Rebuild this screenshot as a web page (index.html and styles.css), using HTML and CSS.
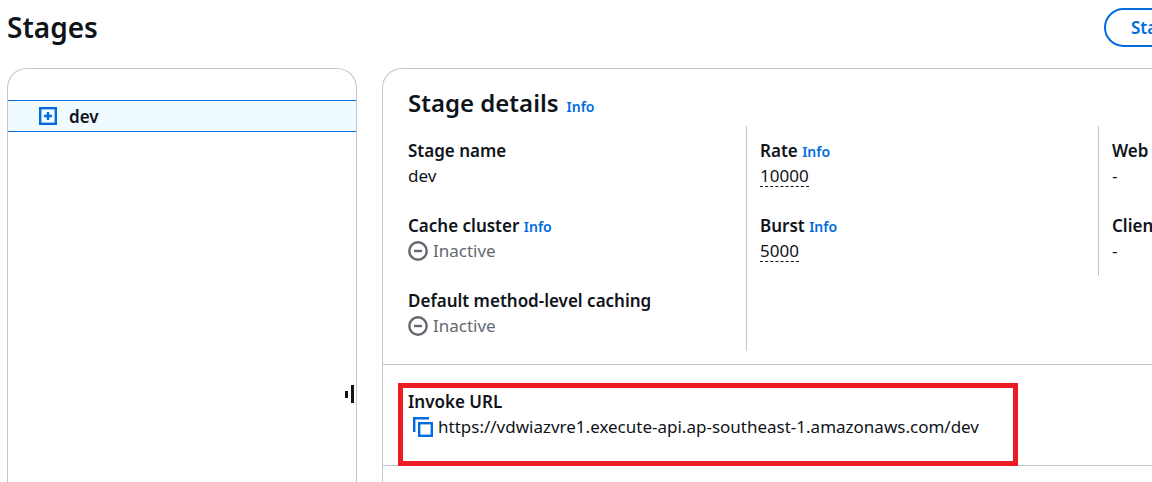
FILE: index.html
```html
<!DOCTYPE html>
<html lang="en">
<head>
<meta charset="utf-8">
<title>Stages</title>
<link rel="stylesheet" href="styles.css">
</head>
<body>
<div class="page">
  <header class="page-header">
    <h1 class="page-title">Stages</h1>
    <div class="page-actions"><button class="button" type="button">Stage actions</button></div>
  </header>
  <div class="layout">
    <nav class="tree" aria-label="Stages">
      <div class="tree-row">
        <button class="icon-button" type="button" aria-label="Expand dev">
          <svg width="18" height="18" viewBox="0 0 18 18" fill="none" stroke="#006ce0" stroke-width="2.4"><rect x="1.2" y="1.2" width="15.6" height="15.6"/><path d="M9 5v8M5 9h8"/></svg>
        </button>
        <span class="tree-label">dev</span>
      </div>
      <button class="resize-handle" type="button" aria-label="Resize panel">
        <svg width="9" height="18" viewBox="0 0 9 18" fill="#0f141a"><path d="M0 6h3v7H0zM6 0h3v18H6z"/></svg>
      </button>
    </nav>
    <main class="details">
      <div class="details-header">
        <h2 class="details-title">Stage details</h2>
        <a class="info" href="#">Info</a>
      </div>
      <div class="columns">
        <dl class="column">
          <div class="item"><dt class="label">Stage name</dt><dd class="value">dev</dd></div>
          <div class="item"><dt class="label">Cache cluster <a class="info" href="#">Info</a></dt>
            <dd class="value value-inactive"><svg width="20" height="20" viewBox="0 0 20 20" fill="none" stroke="#656871" stroke-width="2.4"><circle cx="10" cy="10" r="8.7"/><path d="M6 10h8"/></svg>Inactive</dd></div>
          <div class="item"><dt class="label">Default method-level caching</dt>
            <dd class="value value-inactive"><svg width="20" height="20" viewBox="0 0 20 20" fill="none" stroke="#656871" stroke-width="2.4"><circle cx="10" cy="10" r="8.7"/><path d="M6 10h8"/></svg>Inactive</dd></div>
        </dl>
        <dl class="column column-divided">
          <div class="item"><dt class="label">Rate <a class="info" href="#">Info</a></dt><dd class="value"><span class="hint">10000</span></dd></div>
          <div class="item"><dt class="label">Burst <a class="info" href="#">Info</a></dt><dd class="value"><span class="hint">5000</span></dd></div>
        </dl>
        <dl class="column column-divided column-short">
          <div class="item"><dt class="label">Web</dt><dd class="value">-</dd></div>
          <div class="item"><dt class="label">Client</dt><dd class="value">-</dd></div>
        </dl>
      </div>
      <section class="invoke">
        <h3 class="label">Invoke URL</h3>
        <div class="url-row">
          <button class="icon-button" type="button" aria-label="Copy invoke URL">
            <svg width="20" height="20" viewBox="0 0 20 20" fill="none" stroke="#006ce0" stroke-width="2.4"><path d="M16 1.2H1.2V15"/><rect x="6.2" y="6.2" width="12.6" height="12.6"/></svg>
          </button>
          <span class="url">https://vdwiazvre1.execute-api.ap-southeast-1.amazonaws.com/dev</span>
        </div>
        <div class="highlight"></div>
      </section>
    </main>
  </div>
</div>
</body>
</html>
```
FILE: styles.css
```css
* { box-sizing: border-box; }

body {
  margin: 0;
  overflow: hidden;
  background: #fff;
  color: #0f141a;
  font: 400 17px/25px "Noto Sans", "Open Sans", sans-serif;
}

h1, h2, h3, dl, dd { margin: 0; }

.page {
  display: flex;
  flex-direction: column;
  min-height: 100vh;
  padding: 8px 0 0 7px;
}

.page-header {
  display: flex;
  height: 60px;
}

.page-title {
  flex: 1;
  font-size: 28px;
  line-height: 38px;
  font-weight: 600;
}

.page-actions {
  flex: 0 0 48px;
  min-width: 0;
}

.button {
  height: 39px;
  padding: 0 25px;
  border: 2px solid #006ce0;
  border-radius: 20px;
  background: #fff;
  color: #006ce0;
  font: 600 17px/25px "Noto Sans", "Open Sans", sans-serif;
  white-space: nowrap;
}

.layout {
  display: flex;
  flex: 1;
  gap: 25px;
}

.tree {
  position: relative;
  flex: 0 0 350px;
  padding-top: 31px;
  border: 1px solid #c6c6cd;
  border-bottom: 0;
  border-radius: 20px 20px 0 0;
}

.tree-row {
  display: flex;
  align-items: center;
  gap: 12px;
  height: 32px;
  padding-left: 31px;
  border: solid #006ce0;
  border-width: 1px 0;
  background: #f0fbff;
}

.tree-label { font-weight: 600; }

.icon-button {
  display: flex;
  padding: 0;
  border: 0;
  background: none;
}

.resize-handle {
  position: absolute;
  top: 316px;
  right: 2px;
  display: flex;
  padding: 0;
  border: 0;
  background: none;
}

.details {
  flex: 1;
  min-width: 0;
  border: 1px solid #c6c6cd;
  border-width: 1px 0 0 1px;
  border-radius: 20px 0 0 0;
}

.details-header {
  display: flex;
  align-items: baseline;
  gap: 8px;
  padding: 19px 25px 8px;
}

.details-title {
  font-size: 24px;
  line-height: 30px;
  font-weight: 600;
}

.info {
  color: #006ce0;
  font-size: 14px;
  font-weight: 600;
  line-height: 20px;
  text-decoration: none;
}

.columns {
  display: grid;
  grid-template-columns: 351fr 352fr 54px;
  padding: 0 0 13px 12px;
  border-bottom: 1px solid #c6c6cd;
}

.column {
  min-width: 0;
  padding-left: 13px;
  white-space: nowrap;
}

.column-divided { border-left: 1px solid #c6c6cd; }

.column-short { align-self: start; }

.item { padding: 12px 0 13px; }

.label {
  font-size: 17px;
  line-height: 25px;
  font-weight: 600;
}

.value { height: 25px; }

.value-inactive {
  display: flex;
  align-items: center;
  gap: 5px;
  color: #656871;
}

.hint {
  display: inline-block;
  line-height: 21px;
  border-bottom: 1px dashed #0f141a;
}

.invoke {
  position: relative;
  padding: 24px 25px 26px;
  border-bottom: 1px solid #c6c6cd;
}

.url-row {
  display: flex;
  align-items: center;
  gap: 5px;
  padding-left: 5px;
}

.highlight {
  position: absolute;
  top: 18px;
  left: 15px;
  width: 620px;
  height: 83px;
  border: 5px solid #ed1c24;
  pointer-events: none;
}
```
